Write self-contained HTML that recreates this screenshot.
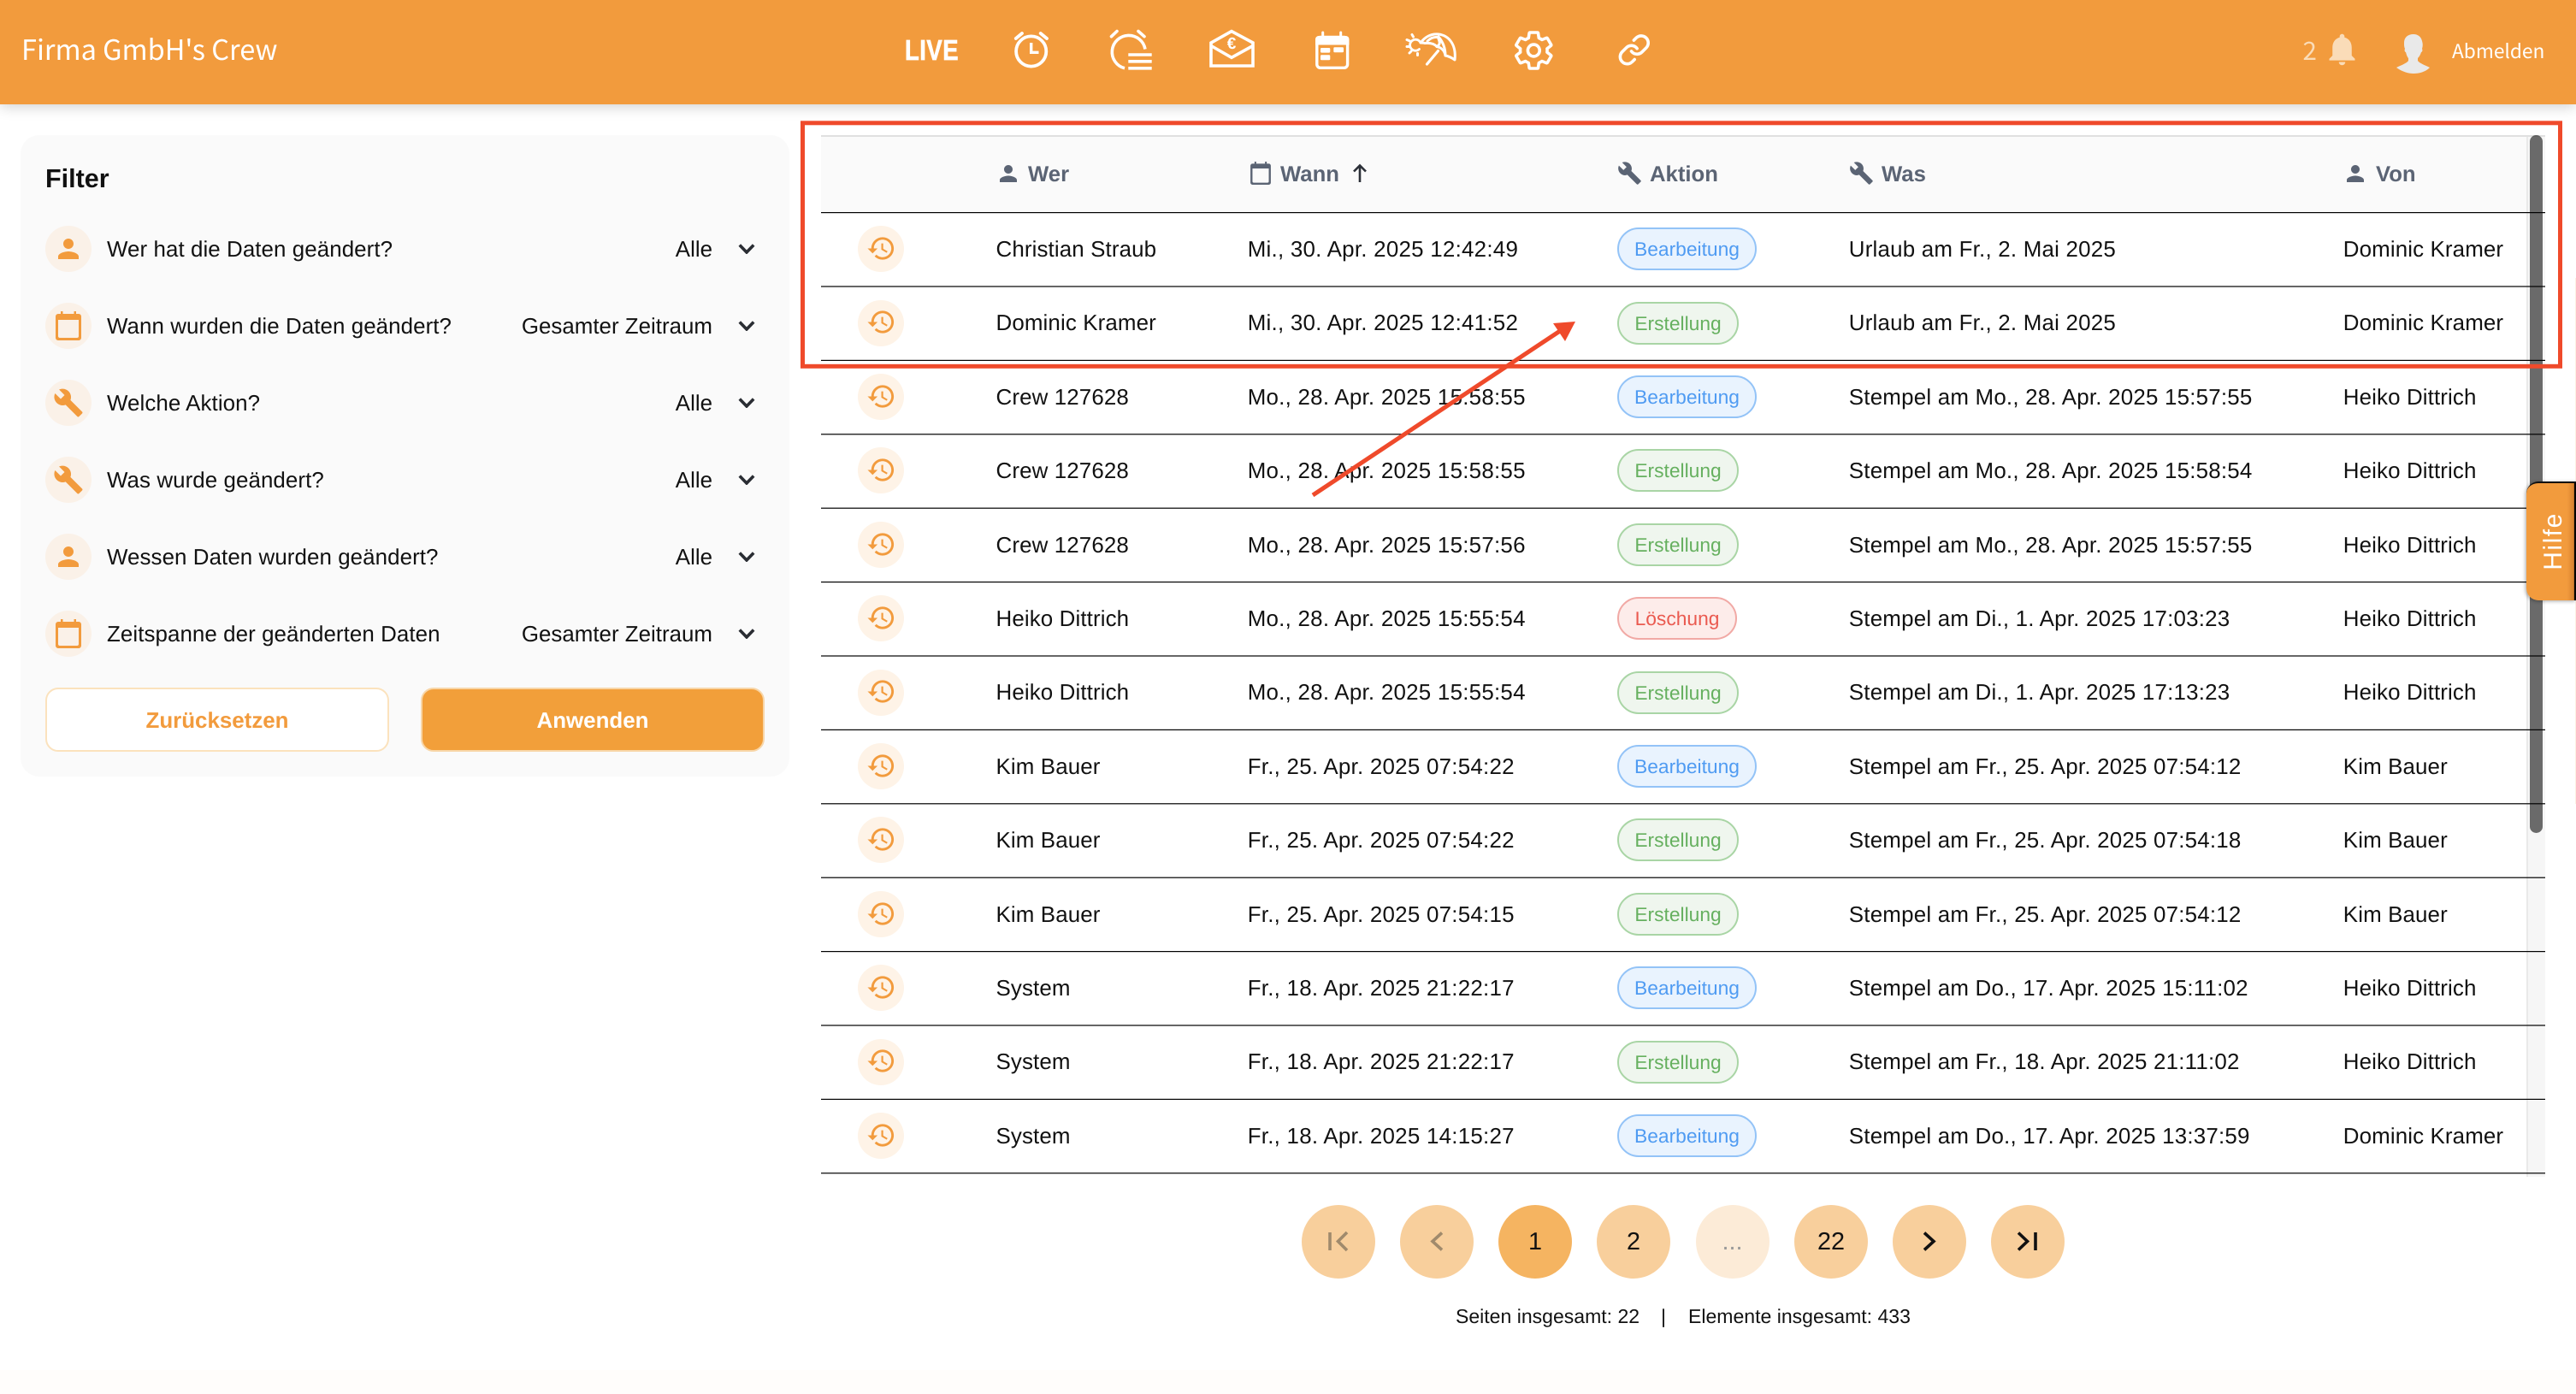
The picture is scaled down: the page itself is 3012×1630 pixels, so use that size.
<!DOCTYPE html>
<html lang="de"><head><meta charset="utf-8"><title>Firma GmbH's Crew</title>
<style>
*{box-sizing:border-box}
html,body{margin:0;padding:0;width:3012px;height:1630px;overflow:hidden;background:#fff}
body{position:relative;font-family:"Liberation Sans",Arial,sans-serif;color:#111;font-size:25.92px;text-rendering:geometricPrecision}
.abs,.r,.c,.f,.fv,.fc,.th,.p,.pg{position:absolute}
svg{position:absolute;overflow:visible}
#hd{position:absolute;left:0;top:0;width:3012px;height:122px;background:#f29b3d;box-shadow:0 2px 16px rgba(0,0,0,.2)}
.ns{font-family:"Noto Sans CJK JP","Liberation Sans",sans-serif}
#panel{position:absolute;left:24px;top:158px;width:899px;height:750px;background:#fafafa;border-radius:22px}
.fc{left:53px;width:54px;height:54px;border-radius:50%;background:#faf1e8}
.f{left:125px;height:54px;line-height:57.5px;white-space:nowrap;letter-spacing:.07px}
.fv{right:2179px;height:54px;line-height:57.5px;white-space:nowrap}
.btn{position:absolute;top:804px;height:75px;border-radius:15px;text-align:center;line-height:75px;font-weight:700;font-size:25.92px}
.r{left:960px;width:2016px;height:86.4px;white-space:nowrap}
.c{top:0;height:86.4px;line-height:89.8px;letter-spacing:.12px}
.c1{left:204.5px}.c2{left:498.7px;letter-spacing:.25px}.c4{left:1201.8px;letter-spacing:.21px}.c5{left:1779.8px}
.hi{left:43px;top:16.2px;width:54px;height:54px;border-radius:50%;background:#fef3e7}
.p{left:931px;top:18.2px;height:50px;line-height:46px;border-radius:25px;border:2px solid;font-size:22.8px;padding:0;text-align:center}
.b{width:163px;background:#e9f3fe;border-color:#93c3f7;color:#4f9bf2}
.e{width:142px;background:#eff6ee;border-color:#a9d5a5;color:#66b05f}
.l{width:140px;background:#fdecea;border-color:#f1a9a5;color:#ea5a50}
.th{top:160px;height:88px;line-height:88.5px;font-weight:700;font-size:25.7px;color:#5b6474;white-space:nowrap}
.pg{top:1408.5px;width:86px;height:86px;border-radius:50%;background:#f8cf9c;text-align:center;line-height:86px;font-size:28.8px;color:#111}
</style></head><body>

<div id="hd"></div>
<div class="abs ns" style="left:25px;top:32px;line-height:50px;font-size:32.5px;color:#fff;white-space:nowrap">Firma GmbH's Crew</div>
<div class="abs" style="left:1057.5px;top:37.5px;line-height:44px;font-size:33.5px;font-weight:700;color:#fff;white-space:nowrap;transform-origin:0 50%;transform:scaleX(.82);letter-spacing:.6px;-webkit-text-stroke:.7px #fff">LIVE</div>

<svg style="left:0;top:0" width="3012" height="122" viewBox="0 0 3012 122" fill="none" stroke="#fff">
 <!-- alarm -->
 <g stroke-width="3.8" stroke-linecap="round">
  <circle cx="1205.7" cy="60" r="17.6"/>
  <path d="M1205.7 50V61.3H1214.5" stroke-linecap="butt" stroke-width="3.4"/>
  <path d="M1187.8 45L1195 39M1216.7 39L1224 45"/>
 </g>
 <!-- alarm list -->
 <g stroke-width="3.6" stroke-linecap="round">
  <path d="M1339 57.5A19.5 19.5 0 1 0 1315 79.8" stroke-linecap="butt"/>
  <path d="M1299.5 42.7L1306 36.5M1331 36.5L1338 42.7"/>
  <path d="M1319.3 64H1346.7M1319.3 71.8H1346.7M1319.3 79.8H1346.7" stroke-linecap="butt"/>
 </g>
 <!-- envelope -->
 <g stroke-width="3.6">
  <path d="M1416 77V50L1440 36.5L1465 50V77Z"/>
  <path d="M1416 53.5L1440 67.3L1465 53.5"/>
 </g>
 <!-- calendar -->
 <g>
  <rect x="1539.8" y="43.5" width="35.8" height="35.8" rx="4" stroke-width="3.4"/>
  <path d="M1538 52.5V46A4 4 0 0 1 1542 42H1573.500A4 4 0 0 1 1577.500 46V52.500Z" fill="#fff" stroke="none"/>
  <path d="M1546.7 38V44M1567.7 38V44" stroke-width="3" stroke-linecap="round"/>
  <rect x="1544" y="56" width="11.3" height="5.6" rx="1.2" fill="#fff" stroke="none"/>
  <rect x="1559.3" y="55.3" width="11.7" height="6" rx="1.2" fill="#fff" stroke="none"/>
  <rect x="1544" y="64.3" width="11.3" height="6" rx="1.2" fill="#fff" stroke="none"/>
 </g>
 <!-- umbrella -->
 <g stroke-width="3" stroke-linecap="round" stroke-linejoin="round">
  <path d="M1661 50C1668 41 1676 39.5 1682 40C1694 41.5 1703 52 1701 70C1696 66.5 1693 65.5 1690 65C1689 59 1685 55.5 1680 54.5C1677 51 1672 50 1666 50.5C1665 50 1663 50 1661 50Z"/>
  <path d="M1669 48C1673 44 1678 43 1682 43.5M1681.5 44C1684 50 1684 52 1680 54.5M1682 43C1688 50 1690 57 1690 65"/>
  <path d="M1668.5 75L1681.5 59.5" stroke-width="3.2"/>
  <path d="M1661 50A6.5 6.5 0 1 0 1659.5 57.5" stroke-width="2.8"/>
  <path d="M1651 40.500L1652.500 43M1645 46.500L1648 47.800M1645 54.500H1648M1650 60L1648 62M1657.500 62.500V64.500"/>
 </g>
 <!-- gear -->
 <g transform="translate(1768.1 33.8) scale(2.1)" stroke-width="1.7" stroke-linejoin="round">
  <path d="M19.43 12.98c.04-.32.07-.64.07-.98s-.03-.66-.07-.98l2.11-1.65c.19-.15.24-.42.12-.64l-2-3.46c-.12-.22-.39-.3-.61-.22l-2.49 1c-.52-.4-1.08-.73-1.69-.98l-.38-2.65C14.46 2.18 14.25 2 14 2h-4c-.25 0-.46.18-.49.42l-.38 2.65c-.61.25-1.17.59-1.69.98l-2.49-1c-.23-.09-.49 0-.61.22l-2 3.46c-.13.22-.07.49.12.64l2.11 1.65c-.04.32-.07.65-.07.98s.03.66.07.98l-2.11 1.65c-.19.15-.24.42-.12.64l2 3.46c.12.22.39.3.61.22l2.49-1c.52.4 1.08.73 1.69.98l.38 2.65c.03.24.24.42.49.42h4c.25 0 .46-.18.49-.42l.38-2.65c.61-.25 1.17-.59 1.69-.98l2.49 1c.23.09.49 0 .61-.22l2-3.46c.12-.22.07-.49-.12-.64l-2.11-1.65z"/>
  <circle cx="12" cy="12" r="3.3"/>
 </g>
 <!-- link -->
 <g transform="translate(1891 38.5) scale(1.65)" stroke-width="2.2" stroke-linecap="round" stroke-linejoin="round">
  <path d="M10 13a5 5 0 0 0 7.54.54l3-3a5 5 0 0 0-7.07-7.07l-1.72 1.71"/>
  <path d="M14 11a5 5 0 0 0-7.54-.54l-3 3a5 5 0 0 0 7.07 7.07l1.71-1.71"/>
 </g>
</svg>
<div class="abs" style="left:1428px;top:41px;width:24px;text-align:center;font-size:19px;line-height:22px;font-weight:700;color:#fff">€</div>

<div class="abs ns" style="left:2692.5px;top:36px;line-height:44px;font-size:29.5px;color:#fadcb8">2</div>
<svg style="left:2715.5px;top:35.300px" width="45" height="45" viewBox="0 0 24 24" fill="#fadcb8"><path d="M12 22c1.1 0 2-.9 2-2h-4c0 1.1.89 2 2 2zm6-6v-5c0-3.07-1.64-5.64-4.500-6.320V4c0-.83-.67-1.500-1.500-1.500s-1.500.67-1.500 1.500v.68C7.630 5.360 6 7.920 6 11v5l-2 2v1h16v-1l-2-2z"/></svg>
<svg style="left:2800px;top:38px" width="44" height="50" viewBox="0 0 44 50" fill="#e9e9e9"><path d="M22 2C15 2 11 6 11 12C11 15 11 17 12 19C11 21 12 23 13 23C14 27 15 29 16 30L16 33C14 36 8 38 2 41C9 46 16 48 22 48C29 48 36 46 41 41C35 38 29 36 27 33L27 30C29 28 30 26 31 23C32 23 33 21 32 19C33 16 33 13 32 10C31 5 27 2 22 2Z"/></svg>
<div class="abs ns" style="left:2867px;top:37px;line-height:44px;font-size:22.7px;color:#fff;white-space:nowrap">Abmelden</div>

<!-- Filter panel -->
<div id="panel"></div>
<div class="abs" style="left:53px;top:188.5px;line-height:40px;font-weight:700;font-size:30.5px;color:#111">Filter</div>

<svg width="0" height="0" style="left:0;top:0"><defs>
 <symbol id="per" viewBox="0 0 24 24"><path d="M12 12c2.210 0 4-1.790 4-4s-1.790-4-4-4-4 1.790-4 4 1.790 4 4 4zm0 2c-2.670 0-8 1.340-8 4v2h16v-2c0-2.660-5.330-4-8-4z"/></symbol>
 <symbol id="wr" viewBox="0 0 24 24"><path d="M22.700 19l-9.100-9.100c.9-2.300.4-5-1.500-6.900-2-2-5-2.400-7.400-1.300L9 6 6 9 1.600 4.700C.4 7.100.9 10.100 2.900 12.100c1.900 1.900 4.600 2.400 6.900 1.500l9.100 9.100c.4.4 1 .4 1.400 0l2.300-2.300c.5-.4.5-1.100.1-1.400z"/></symbol>
 <symbol id="hist" viewBox="0 0 24 24"><path d="M13 3c-4.970 0-9 4.030-9 9H1l3.890 3.890.07.14L9 12H6c0-3.870 3.130-7 7-7s7 3.130 7 7-3.130 7-7 7c-1.930 0-3.680-.79-4.940-2.060l-1.420 1.420C8.270 19.990 10.510 21 13 21c4.970 0 9-4.030 9-9s-4.030-9-9-9zm-1 5v5l4.280 2.540.72-1.210-3.500-2.080V8H12z"/></symbol>
 <symbol id="cal" viewBox="0 0 30 34"><path fill-rule="evenodd" d="M6 0h2.500v3h13V0H24v3h3a3 3 0 0 1 3 3v25a3 3 0 0 1-3 3H3a3 3 0 0 1-3-3V6a3 3 0 0 1 3-3h3zM3 10v19a2 2 0 0 0 2 2h20a2 2 0 0 0 2-2V10z"/></symbol>
 <symbol id="chev" viewBox="0 0 20 12"><path d="M1.800 1.500L10 10L18.200 1.500" fill="none" stroke="#2a2d33" stroke-width="3.600"/></symbol>
</defs></svg>

<div class="fc" style="top:264px"></div><svg style="left:62px;top:273px;fill:#f29b3d" width="36" height="36"><use href="#per"/></svg>
<div class="f" style="top:264px">Wer hat die Daten geändert?</div><div class="fv" style="top:264px">Alle</div>
<svg style="left:863px;top:285px" width="20" height="12"><use href="#chev"/></svg>

<div class="fc" style="top:354px"></div><svg style="left:65px;top:364px;fill:#f29b3d" width="30" height="34"><use href="#cal"/></svg>
<div class="f" style="top:354px">Wann wurden die Daten geändert?</div><div class="fv" style="top:354px">Gesamter Zeitraum</div>
<svg style="left:863px;top:375px" width="20" height="12"><use href="#chev"/></svg>

<div class="fc" style="top:444px"></div><svg style="left:62px;top:453px;fill:#f29b3d" width="36" height="36"><use href="#wr"/></svg>
<div class="f" style="top:444px">Welche Aktion?</div><div class="fv" style="top:444px">Alle</div>
<svg style="left:863px;top:465px" width="20" height="12"><use href="#chev"/></svg>

<div class="fc" style="top:534px"></div><svg style="left:62px;top:543px;fill:#f29b3d" width="36" height="36"><use href="#wr"/></svg>
<div class="f" style="top:534px">Was wurde geändert?</div><div class="fv" style="top:534px">Alle</div>
<svg style="left:863px;top:555px" width="20" height="12"><use href="#chev"/></svg>

<div class="fc" style="top:624px"></div><svg style="left:62px;top:633px;fill:#f29b3d" width="36" height="36"><use href="#per"/></svg>
<div class="f" style="top:624px">Wessen Daten wurden geändert?</div><div class="fv" style="top:624px">Alle</div>
<svg style="left:863px;top:645px" width="20" height="12"><use href="#chev"/></svg>

<div class="fc" style="top:714px"></div><svg style="left:65px;top:724px;fill:#f29b3d" width="30" height="34"><use href="#cal"/></svg>
<div class="f" style="top:714px">Zeitspanne der geänderten Daten</div><div class="fv" style="top:714px">Gesamter Zeitraum</div>
<svg style="left:863px;top:735px" width="20" height="12"><use href="#chev"/></svg>

<div class="btn" style="left:53px;width:402px;background:#fff;border:2px solid #fbe2bd;color:#f29b3d">Zurücksetzen</div>
<div class="btn" style="left:492px;width:402px;background:#f29f3a;border:2px solid #f8d6a8;color:#fff">Anwenden</div>

<!-- Table -->
<div class="abs" style="left:960px;top:158px;width:2016px;height:90px;background:#fafafa;border-top:2px solid #e0e0e0"></div>
<div class="abs" style="left:2954px;top:160px;width:22px;height:1216px;background:#f6f6f6;border-left:2px solid #e9e9e9"></div>

<svg style="left:1164px;top:188px;fill:#5b6474" width="30" height="30"><use href="#per"/></svg>
<div class="th" style="left:1202px">Wer</div>
<svg style="left:1462px;top:189px;fill:#5b6474" width="24" height="27"><use href="#cal"/></svg>
<div class="th" style="left:1497px">Wann</div>
<svg style="left:1580px;top:190px" width="20" height="24" fill="none" stroke="#2c3038" stroke-width="2.600"><path d="M10 23V4M3 10.500L10 3.500L17 10.500"/></svg>
<svg style="left:1891px;top:188px;fill:#5b6474" width="29" height="29"><use href="#wr"/></svg>
<div class="th" style="left:1929px">Aktion</div>
<svg style="left:2162px;top:188px;fill:#5b6474" width="29" height="29"><use href="#wr"/></svg>
<div class="th" style="left:2200px">Was</div>
<svg style="left:2739px;top:188px;fill:#5b6474" width="30" height="30"><use href="#per"/></svg>
<div class="th" style="left:2778px">Von</div>

<div class="r" style="top:248px"><div class="c hi"></div><svg style="left:52.500px;top:25px;fill:#f29b3d" width="35" height="35"><use href="#hist"/></svg><span class="c c1">Christian Straub</span><span class="c c2">Mi., 30. Apr. 2025 12:42:49</span><span class="p b">Bearbeitung</span><span class="c c4">Urlaub am Fr., 2. Mai 2025</span><span class="c c5">Dominic Kramer</span></div>
<div class="r" style="top:334.4px"><div class="c hi"></div><svg style="left:52.500px;top:25px;fill:#f29b3d" width="35" height="35"><use href="#hist"/></svg><span class="c c1">Dominic Kramer</span><span class="c c2">Mi., 30. Apr. 2025 12:41:52</span><span class="p e">Erstellung</span><span class="c c4">Urlaub am Fr., 2. Mai 2025</span><span class="c c5">Dominic Kramer</span></div>
<div class="r" style="top:420.8px"><div class="c hi"></div><svg style="left:52.500px;top:25px;fill:#f29b3d" width="35" height="35"><use href="#hist"/></svg><span class="c c1">Crew 127628</span><span class="c c2">Mo., 28. Apr. 2025 15:58:55</span><span class="p b">Bearbeitung</span><span class="c c4">Stempel am Mo., 28. Apr. 2025 15:57:55</span><span class="c c5">Heiko Dittrich</span></div>
<div class="r" style="top:507.2px"><div class="c hi"></div><svg style="left:52.500px;top:25px;fill:#f29b3d" width="35" height="35"><use href="#hist"/></svg><span class="c c1">Crew 127628</span><span class="c c2">Mo., 28. Apr. 2025 15:58:55</span><span class="p e">Erstellung</span><span class="c c4">Stempel am Mo., 28. Apr. 2025 15:58:54</span><span class="c c5">Heiko Dittrich</span></div>
<div class="r" style="top:593.6px"><div class="c hi"></div><svg style="left:52.500px;top:25px;fill:#f29b3d" width="35" height="35"><use href="#hist"/></svg><span class="c c1">Crew 127628</span><span class="c c2">Mo., 28. Apr. 2025 15:57:56</span><span class="p e">Erstellung</span><span class="c c4">Stempel am Mo., 28. Apr. 2025 15:57:55</span><span class="c c5">Heiko Dittrich</span></div>
<div class="r" style="top:680px"><div class="c hi"></div><svg style="left:52.500px;top:25px;fill:#f29b3d" width="35" height="35"><use href="#hist"/></svg><span class="c c1">Heiko Dittrich</span><span class="c c2">Mo., 28. Apr. 2025 15:55:54</span><span class="p l">Löschung</span><span class="c c4">Stempel am Di., 1. Apr. 2025 17:03:23</span><span class="c c5">Heiko Dittrich</span></div>
<div class="r" style="top:766.4px"><div class="c hi"></div><svg style="left:52.500px;top:25px;fill:#f29b3d" width="35" height="35"><use href="#hist"/></svg><span class="c c1">Heiko Dittrich</span><span class="c c2">Mo., 28. Apr. 2025 15:55:54</span><span class="p e">Erstellung</span><span class="c c4">Stempel am Di., 1. Apr. 2025 17:13:23</span><span class="c c5">Heiko Dittrich</span></div>
<div class="r" style="top:852.8px"><div class="c hi"></div><svg style="left:52.500px;top:25px;fill:#f29b3d" width="35" height="35"><use href="#hist"/></svg><span class="c c1">Kim Bauer</span><span class="c c2">Fr., 25. Apr. 2025 07:54:22</span><span class="p b">Bearbeitung</span><span class="c c4">Stempel am Fr., 25. Apr. 2025 07:54:12</span><span class="c c5">Kim Bauer</span></div>
<div class="r" style="top:939.2px"><div class="c hi"></div><svg style="left:52.500px;top:25px;fill:#f29b3d" width="35" height="35"><use href="#hist"/></svg><span class="c c1">Kim Bauer</span><span class="c c2">Fr., 25. Apr. 2025 07:54:22</span><span class="p e">Erstellung</span><span class="c c4">Stempel am Fr., 25. Apr. 2025 07:54:18</span><span class="c c5">Kim Bauer</span></div>
<div class="r" style="top:1025.6px"><div class="c hi"></div><svg style="left:52.500px;top:25px;fill:#f29b3d" width="35" height="35"><use href="#hist"/></svg><span class="c c1">Kim Bauer</span><span class="c c2">Fr., 25. Apr. 2025 07:54:15</span><span class="p e">Erstellung</span><span class="c c4">Stempel am Fr., 25. Apr. 2025 07:54:12</span><span class="c c5">Kim Bauer</span></div>
<div class="r" style="top:1112px"><div class="c hi"></div><svg style="left:52.500px;top:25px;fill:#f29b3d" width="35" height="35"><use href="#hist"/></svg><span class="c c1">System</span><span class="c c2">Fr., 18. Apr. 2025 21:22:17</span><span class="p b">Bearbeitung</span><span class="c c4">Stempel am Do., 17. Apr. 2025 15:11:02</span><span class="c c5">Heiko Dittrich</span></div>
<div class="r" style="top:1198.4px"><div class="c hi"></div><svg style="left:52.500px;top:25px;fill:#f29b3d" width="35" height="35"><use href="#hist"/></svg><span class="c c1">System</span><span class="c c2">Fr., 18. Apr. 2025 21:22:17</span><span class="p e">Erstellung</span><span class="c c4">Stempel am Fr., 18. Apr. 2025 21:11:02</span><span class="c c5">Heiko Dittrich</span></div>
<div class="r" style="top:1284.8px"><div class="c hi"></div><svg style="left:52.500px;top:25px;fill:#f29b3d" width="35" height="35"><use href="#hist"/></svg><span class="c c1">System</span><span class="c c2">Fr., 18. Apr. 2025 14:15:27</span><span class="p b">Bearbeitung</span><span class="c c4">Stempel am Do., 17. Apr. 2025 13:37:59</span><span class="c c5">Dominic Kramer</span></div>

<svg style="left:0;top:0" width="3012" height="1630" viewBox="0 0 3012 1630" fill="#000">
 <rect x="960" y="248" width="2016" height="1.2"/><rect x="960" y="334.4" width="2016" height="1.2"/><rect x="960" y="420.8" width="2016" height="1.2"/><rect x="960" y="507.2" width="2016" height="1.2"/><rect x="960" y="593.6" width="2016" height="1.2"/><rect x="960" y="680" width="2016" height="1.2"/><rect x="960" y="766.4" width="2016" height="1.2"/><rect x="960" y="852.8" width="2016" height="1.2"/><rect x="960" y="939.2" width="2016" height="1.2"/><rect x="960" y="1025.6" width="2016" height="1.2"/><rect x="960" y="1112" width="2016" height="1.2"/><rect x="960" y="1198.4" width="2016" height="1.2"/><rect x="960" y="1284.8" width="2016" height="1.2"/><rect x="960" y="1371.2" width="2016" height="1.2"/>
</svg>
<div class="abs" style="left:2958px;top:158px;width:15px;height:816px;border-radius:8px;background:rgba(0,0,0,.57)"></div>

<!-- Pagination -->
<div class="pg" style="left:1522px"></div>
<div class="pg" style="left:1637px"></div>
<div class="pg" style="left:1751.5px;background:#f5b461;padding-left:1px">1</div>
<div class="pg" style="left:1866.5px;padding-left:1px">2</div>
<div class="pg" style="left:1982.5px;background:#fcebd7;color:#999">...</div>
<div class="pg" style="left:2098px">22</div>
<div class="pg" style="left:2213px"></div>
<div class="pg" style="left:2328px"></div>
<svg style="left:0;top:0" width="3012" height="1630" viewBox="0 0 3012 1630" fill="none" stroke-width="3.6">
 <path d="M1555 1441V1462M1575 1441L1564.500 1451.500L1575 1462" stroke="#a08a6c"/>
 <path d="M1686 1441.500L1675 1451.500L1686 1461.500" stroke="#a08a6c"/>
 <path d="M2250 1441.500L2261 1451.500L2250 1461.500" stroke="#111"/>
 <path d="M2360 1441.500L2370.500 1451.500L2360 1461.500M2380 1441V1462" stroke="#111"/>
</svg>
<div class="abs" style="left:1702px;top:1522px;line-height:34px;font-size:23.04px;white-space:nowrap">Seiten insgesamt: 22</div>
<div class="abs" style="left:1942px;top:1522px;line-height:34px;font-size:23.04px">|</div>
<div class="abs" style="left:1974px;top:1522px;line-height:34px;font-size:23.04px;white-space:nowrap">Elemente insgesamt: 433</div>
<div class="abs" style="left:0;top:1602px;width:3012px;height:28px;background:#fffdfb"></div>

<!-- Hilfe tab -->
<div class="abs" style="left:3010.500px;top:325px;width:1.500px;height:615px;background:#fdf1e4"></div>
<div class="abs" style="left:2954px;top:563px;width:58px;height:139px;border-radius:14px 0 0 14px;background:linear-gradient(to right,#f29b3d 0,#f29b3d 82%,#d8812f 96%,#000 96.500%,#000 100%);border-top:2px solid #111;box-shadow:-1px 1px 4px rgba(0,0,0,.35)"></div>
<div class="abs" style="left:2986px;top:633px;width:0;height:0"><div style="position:absolute;left:-50px;top:-20px;width:100px;height:40px;line-height:40px;text-align:center;font-size:30px;letter-spacing:1.500px;color:#fff;transform:rotate(-90deg)">Hilfe</div></div>

<!-- Annotation -->
<svg style="left:0;top:0" width="3012" height="1630" viewBox="0 0 3012 1630" fill="none">
 <rect x="938.500" y="143.800" width="2055" height="284.500" stroke="#ef4a2b" stroke-width="5"/>
 <path d="M1535 579L1824 387" stroke="#ef4a2b" stroke-width="5"/>
 <path d="M1842 376L1816 378L1830 399Z" fill="#ef4a2b"/>
</svg>
</body></html>
